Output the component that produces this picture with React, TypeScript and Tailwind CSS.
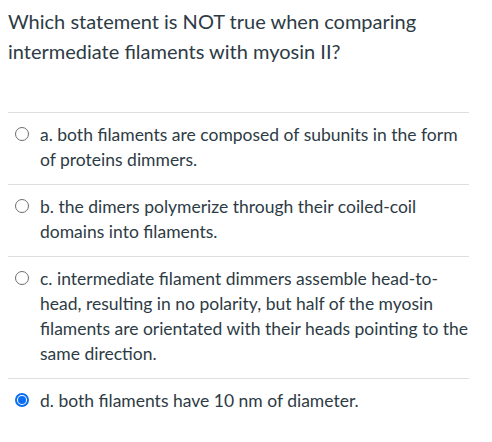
const OPTIONS = [
  {
    id: "a",
    text: "a. both filaments are composed of subunits in the form of proteins dimmers.",
  },
  {
    id: "b",
    text: "b. the dimers polymerize through their coiled-coil domains into filaments.",
  },
  {
    id: "c",
    text: "c. intermediate filament dimmers assemble head-to-head, resulting in no polarity, but half of the myosin filaments are orientated with their heads pointing to the same direction.",
  },
  {
    id: "d",
    text: "d. both filaments have 10 nm of diameter.",
  },
];

const SELECTED = "d";

function Radio({ checked }: { checked: boolean }) {
  if (checked) {
    return (
      <span className="mt-[5px] flex h-[14px] w-[14px] shrink-0 items-center justify-center rounded-full border-2 border-[#0b6cf4] bg-white">
        <span className="h-[8px] w-[8px] rounded-full bg-[#0b6cf4]" />
      </span>
    );
  }
  return (
    <span className="mt-[5px] h-[14px] w-[14px] shrink-0 rounded-full border border-[#6b6f73] bg-white" />
  );
}

export default function App() {
  return (
    <div className="min-h-screen w-full bg-white font-['Lato',sans-serif] text-[#2d3b45]">
      <div className="w-[469px] pl-[8px]">
        <p className="pt-[6px] pb-[46px] text-[20px] leading-[30px]">
          Which statement is NOT true when comparing intermediate filaments
          with myosin II?
        </p>
        <div className="flex flex-col border-t border-[#dcdfe1]">
          {OPTIONS.map((opt) => (
            <label
              key={opt.id}
              className="flex gap-[11px] border-b border-[#dcdfe1] pt-[9px] pb-[12px] pl-[7px] last:border-b-0"
            >
              <Radio checked={opt.id === SELECTED} />
              <span className="-mr-[2px] text-[17.5px] leading-[25px]">
                {opt.text}
              </span>
            </label>
          ))}
        </div>
      </div>
    </div>
  );
}
